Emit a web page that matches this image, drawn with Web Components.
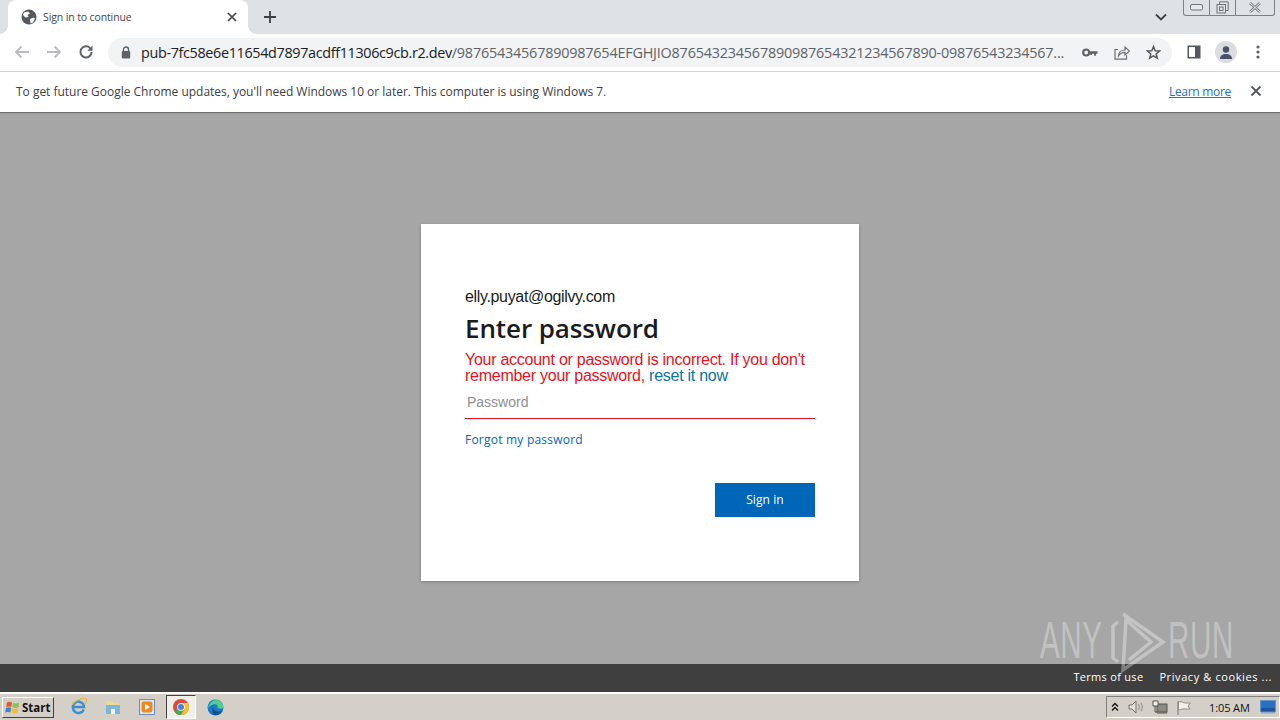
<!DOCTYPE html>
<html>
<head>
<meta charset="utf-8">
<title>Sign in to continue</title>
<style>
  html, body { margin: 0; height: 100%; overflow: hidden; }
  body { width: 1280px; height: 720px; display: flex; flex-direction: column; font-family: "Open Sans", "Liberation Sans", sans-serif; }
</style>
</head>
<body>
<tab-strip>Sign in to continue</tab-strip>
<tool-bar></tool-bar>
<info-bar>To get future Google Chrome updates, you'll need Windows 10 or later. This computer is using Windows 7.</info-bar>
<page-area>
  <login-card email="elly.puyat@ogilvy.com"></login-card>
  <any-run></any-run>
</page-area>
<page-footer></page-footer>
<task-bar></task-bar>

<script>
class TabStrip extends HTMLElement {
  constructor() {
    super()
    this.attachShadow({ mode: 'open' }).innerHTML = `
    <style>
      :host { display: flex; height: 34px; background: #dee1e6; position: relative; flex: none; }
      .tab { width: 240px; margin: 0 0 0 8px; background: #fff; border-radius: 8px 8px 0 0; display: flex; align-items: center; padding: 0 11px 0 13px; box-sizing: border-box; height: 34px; position: relative; }
      .tab::before, .tab::after { content: ""; position: absolute; bottom: 0; width: 8px; height: 8px; }
      .tab::before { left: -8px; background: radial-gradient(circle at 0 0, transparent 7.5px, #fff 8px); }
      .tab::after { right: -8px; background: radial-gradient(circle at 100% 0, transparent 7.5px, #fff 8px); }
      .tab svg { flex: none; }
      .title { flex: 1; margin-left: 6px; font-size: 10.5px; color: #45474a; white-space: nowrap; letter-spacing: -.12px; }
      .plus { margin: 0 0 0 15px; align-self: center; }
      .chev { position: absolute; left: 1155px; top: 13px; }
      .win { position: absolute; left: 1183px; top: 0; width: 92px; height: 16px; border: 1px solid #7d8085; border-top: 0; border-radius: 0 0 3px 3px; display: flex; box-sizing: border-box; }
      .win span { display: flex; align-items: center; justify-content: center; border-left: 1px solid #7d8085; height: 100%; }
      .win span:first-child { border-left: 0; width: 25px; }
      .win span:nth-child(2) { width: 25px; }
      .win span:nth-child(3) { flex: 1; }
    </style>
    <div class="tab">
      <svg width="16" height="16" viewBox="0 0 16 16"><circle cx="8" cy="8" r="7.5" fill="#55585c"/><path d="M3 3.500 7 2.500 9 4.500 6.500 6 7.500 8 4.500 8.500 2 6zM9 10l3.500-1.500 1.500 1-2 4-2.500 1z" fill="#fff"/></svg>
      <span class="title"><slot></slot></span>
      <svg width="10" height="10" viewBox="0 0 10 10"><path d="M1 1 9 9M9 1 1 9" stroke="#45474a" stroke-width="1.700"/></svg>
    </div>
    <svg class="plus" width="14" height="14" viewBox="0 0 14 14"><path d="M7 1v12M1 7h12" stroke="#3c4043" stroke-width="1.800"/></svg>
    <svg class="chev" width="12" height="8" viewBox="0 0 12 8"><path d="M1 1.500 6 6.500 11 1.500" fill="none" stroke="#3c4043" stroke-width="1.800"/></svg>
    <div class="win">
      <span><svg width="13" height="7" viewBox="0 0 13 7"><rect x=".5" y=".5" width="12" height="5.500" rx="1.500" fill="#e8eaee" stroke="#6f7276"/></svg></span>
      <span><svg width="13" height="13" viewBox="0 0 13 13"><path d="M3.500 3V.8h8.700v8.700H10" fill="none" stroke="#6f7276"/><rect x="1" y="3.500" width="8.500" height="8.500" fill="none" stroke="#6f7276"/><rect x="3.500" y="6" width="3.500" height="3.500" fill="none" stroke="#6f7276"/></svg></span>
      <span><svg width="14" height="11" viewBox="0 0 14 11"><path d="M2 1 12 10M12 1 2 10" stroke="#7b7e83" stroke-width="2.600"/><path d="M2 1 12 10M12 1 2 10" stroke="#e8eaee" stroke-width="1"/></svg></span>
    </div>`
  }
}

class ToolBar extends HTMLElement {
  constructor() {
    super()
    this.attachShadow({ mode: 'open' }).innerHTML = `
    <style>
      :host { display: flex; align-items: center; height: 38px; background: #fff; border-bottom: 1px solid #d2d3d5; flex: none; padding-left: 14px; padding-bottom: 1px; box-sizing: border-box; }
      .nav { display: flex; align-items: center; gap: 16px; width: 94px; flex: none; }
      .omni { width: 1064px; height: 29px; flex: none; background: #f1f3f4; border-radius: 15px; display: flex; align-items: center; box-sizing: border-box; padding: 0 11px 0 13px; }
      .url { flex: 1; min-width: 0; margin-left: 10px; font-size: 14.400px; white-space: nowrap; color: #202124; letter-spacing: -.35px; }
      .url i { font-style: normal; color: #5f6368; letter-spacing: -.2px; }
      .actions { display: flex; align-items: center; gap: 16px; flex: none; }
      .right { display: flex; align-items: center; margin-left: 15px; flex: none; }
      .avatar { width: 22px; height: 22px; margin: 0 19px 0 14px; border-radius: 50%; background: #dadce0; display: flex; align-items: center; justify-content: center; }
    </style>
    <div class="nav">
      <svg width="16" height="14" viewBox="0 0 16 14"><path d="M15 7H2M7.500 1.500 2 7l5.500 5.500" fill="none" stroke="#b9bbbe" stroke-width="1.800"/></svg>
      <svg width="16" height="14" viewBox="0 0 16 14"><path d="M1 7h13M8.500 1.500 14 7l-5.500 5.500" fill="none" stroke="#b9bbbe" stroke-width="1.800"/></svg>
      <svg width="16" height="16" viewBox="0 0 16 16"><path d="M13.600 8a5.600 5.600 0 1 1-1.500-3.900" fill="none" stroke="#5f6368" stroke-width="2"/><path d="M14.500 1.500v5.200H9.300z" fill="#5f6368"/></svg>
    </div>
    <div class="omni">
      <svg width="10" height="13" viewBox="0 0 10 13"><path d="M2.500 5V3.500a2.500 2.500 0 0 1 5 0V5" fill="none" stroke="#5f6368" stroke-width="1.400"/><rect x=".8" y="5" width="8.400" height="7.400" rx="1" fill="#5f6368"/></svg>
      <span class="url">pub-7fc58e6e11654d7897acdff11306c9cb.r2.dev<i>/98765434567890987654EFGHJIO876543234567890987654321234567890-09876543234567...</i></span>
      <span class="actions">
        <svg width="16" height="9" viewBox="0 0 16 9"><circle cx="4.200" cy="4.500" r="3" fill="none" stroke="#5f6368" stroke-width="2.200"/><path d="M7 3.300h8.500v2.400h-1.600v2h-1.800v-2H10v1.200H8.300V5.700H7z" fill="#5f6368"/></svg>
        <svg width="16" height="15" viewBox="0 0 16 15"><path d="M4 4.500H1v9.700h11.500v-4" fill="none" stroke="#6b6e72" stroke-width="1.200"/><path d="M4.500 11c0-4 3-6 6.500-6V2l4.500 4-4.500 4V7.400c-2.800 0-5 1-6.500 3.600z" fill="none" stroke="#6b6e72" stroke-width="1.200"/></svg>
        <svg width="15" height="15" viewBox="0 0 15 15"><path d="M7.500 1.600 9.200 5.700l4.400.3-3.400 2.900 1.100 4.300-3.800-2.400-3.800 2.400 1.100-4.300L1.400 6l4.400-.3z" fill="none" stroke="#55585c" stroke-width="1.500"/></svg>
      </span>
    </div>
    <div class="right">
      <svg width="14" height="14" viewBox="0 0 14 14"><rect x=".5" y=".5" width="13" height="13" fill="#55585c"/><rect x="2" y="2" width="6" height="10" fill="#fff"/></svg>
      <span class="avatar"><svg width="14" height="13" viewBox="0 0 14 13"><circle cx="7" cy="3.500" r="3.200" fill="#4a5068"/><path d="M1 13c0-3.500 2.500-5 6-5s6 1.500 6 5z" fill="#4a5068"/></svg></span>
      <svg width="4" height="14" viewBox="0 0 4 14"><circle cx="2" cy="2" r="1.600" fill="#5f6368"/><circle cx="2" cy="7" r="1.600" fill="#5f6368"/><circle cx="2" cy="12" r="1.600" fill="#5f6368"/></svg>
    </div>`
  }
}

class InfoBar extends HTMLElement {
  constructor() {
    super()
    this.attachShadow({ mode: 'open' }).innerHTML = `
    <style>
      :host { display: flex; align-items: center; height: 40px; background: #fff; flex: none; padding: 0 18px 2px 16px; box-sizing: border-box; box-shadow: 0 1px 1px #6f6f6f; position: relative; z-index: 1; font-size: 12px; color: #3c4043; }
      .msg { flex: 1; white-space: nowrap; letter-spacing: -.02px; }
      a { color: #2a6fc4; text-decoration: underline; margin-right: 19px; letter-spacing: -.3px; }
    </style>
    <span class="msg"><slot></slot></span>
    <a href="#">Learn more</a>
    <svg width="12" height="12" viewBox="0 0 12 12"><path d="M1.500 1.500l9 9M10.500 1.500l-9 9" stroke="#55585c" stroke-width="1.800"/></svg>`
  }
}

class PageArea extends HTMLElement {
  constructor() {
    super()
    this.attachShadow({ mode: 'open' }).innerHTML = `
    <style>
      :host { display: flex; justify-content: center; align-items: flex-start; flex: 1; background: #a6a6a6; padding-top: 112px; box-sizing: border-box; position: relative; }
    </style>
    <slot></slot>`
  }
}

class LoginCard extends HTMLElement {
  constructor() {
    super()
    this.attachShadow({ mode: 'open' }).innerHTML = `
    <style>
      :host { display: block; width: 438px; height: 357px; background: #fff; box-sizing: border-box; padding: 63px 44px 0; box-shadow: 0 1px 3px rgba(0,0,0,.25); font-family: "Liberation Sans", Arial, sans-serif; }
      .email { font-size: 16px; line-height: 19px; color: #1b1b1b; letter-spacing: -.34px; }
      h1 { margin: 5px 0 0; font: 600 26px/35px "Open Sans", sans-serif; color: #1b1b1b; letter-spacing: -.1px; }
      .err { margin-top: 6px; font-size: 16px; line-height: 16px; color: #e81123; letter-spacing: -.26px; }
      .err a { color: #0b74a0; text-decoration: none; }
      .field { margin-top: 2px; height: 32px; border-bottom: 1px solid #e81123; font-size: 14px; line-height: 32px; color: #8f8f8f; padding-left: 2px; }
      .forgot { display: block; margin-top: 13px; font: 12px/16px "Open Sans", sans-serif; color: #0067b8; text-decoration: none; letter-spacing: .22px; }
      .row { display: flex; justify-content: flex-end; margin-top: 35px; }
      button { width: 100px; height: 34px; border: 0; background: #0067b8; color: #fff; font: 12px "Open Sans", sans-serif; padding: 0 0 2px; letter-spacing: .1px; }
    </style>
    <div class="email"></div>
    <h1>Enter password</h1>
    <div class="err">Your account or password is incorrect. If you don't remember your password, <a href="#">reset it now</a></div>
    <div class="field">Password</div>
    <a class="forgot" href="#">Forgot my password</a>
    <div class="row"><button>Sign in</button></div>`
    this.shadowRoot.querySelector('.email').textContent = this.getAttribute('email')
  }
}

class AnyRun extends HTMLElement {
  constructor() {
    super()
    this.attachShadow({ mode: 'open' }).innerHTML = `
    <style>
      :host { position: absolute; left: 1038px; top: 497px; width: 196px; height: 64px; color: rgba(255,255,255,.33); font: 400 51px/44px "Liberation Sans", sans-serif; z-index: 2; pointer-events: none; }
      span { position: absolute; top: 10px; transform: scaleX(.58); transform-origin: left center; white-space: nowrap; letter-spacing: 1px; }
      .a { left: 2px; }
      .r { left: 130px; }
      svg { position: absolute; left: 71px; top: 1px; }
    </style>
    <span class="a">ANY</span>
    <svg width="58" height="64" viewBox="0 0 58 64" fill="none" stroke="rgba(255,255,255,.34)" stroke-width="3.500"><path d="M9 12 4 16V48l5 4"/><path d="M14 4 54 32 14 60 17 10 42 32 20 50"/></svg>
    <span class="r">RUN</span>`
  }
}

class PageFooter extends HTMLElement {
  constructor() {
    super()
    this.attachShadow({ mode: 'open' }).innerHTML = `
    <style>
      :host { display: flex; justify-content: flex-end; align-items: flex-end; gap: 16px; height: 28px; background: #3f3f3f; color: #fff; font-size: 11px; padding: 0 8px 8px 0; box-sizing: border-box; flex: none; letter-spacing: .3px; white-space: nowrap; position: relative; z-index: 1; }
      span + span { letter-spacing: .6px; }
    </style>
    <span>Terms of use</span><span>Privacy &amp; cookies ...</span>`
  }
}

class TaskBar extends HTMLElement {
  constructor() {
    super()
    this.attachShadow({ mode: 'open' }).innerHTML = `
    <style>
      :host { display: flex; align-items: center; height: 28px; background: #d4d0c8; border-top: 2px solid #fff; box-sizing: border-box; flex: none; position: relative; }
      .start { margin-left: 2px; width: 52px; height: 21px; box-sizing: border-box; display: flex; align-items: center; gap: 2px; padding-left: 2px; border: 1px solid; border-color: #fff #404040 #404040 #fff; font: 700 11.500px "Open Sans", sans-serif; color: #111; background: #d4d0c8; }
      .apps { display: flex; align-items: center; margin-left: 8px; height: 100%; }
      .apps > * { flex: none; }
      .slot { width: 34px; display: flex; justify-content: center; align-items: center; height: 24px; }
      .active { width: 30px; height: 24px; margin: 0 2px; box-sizing: border-box; background: #f1efea; border: 1px solid; border-color: #404040 #fff #fff #404040; display: flex; align-items: center; justify-content: center; }
      .tray { margin-left: auto; margin-right: 0; width: 174px; height: 22px; display: flex; align-items: center; box-sizing: border-box; border: 1px solid; border-color: #808080 #fff #fff #808080; padding-left: 4px; font: 11px "Open Sans", sans-serif; color: #111; white-space: nowrap; }
      .tray svg { flex: none; }
      .clock { margin-left: 17px; width: 48px; letter-spacing: -.1px; }
    </style>
    <div class="start">
      <svg width="15" height="15" viewBox="0 0 15 15"><path d="M2 2.500c1.500-1 3-.8 5 0L6.300 7C4.500 6.300 3 6.200 1.200 7z" fill="#e2572c"/><path d="M8 2.800c2 .8 3.500.8 6 0l-.6 4.400c-2.300.9-3.800.6-5.800 0z" fill="#8cc04a"/><path d="M1 8c2-1 3.500-.8 5.200 0l-.7 4.600c-1.800-.8-3.300-1-5.300 0z" fill="#3f83d6"/><path d="M7.400 8.200c2 .6 3.600.9 5.900 0l-.7 4.400c-2.400 1-4 .6-5.900-.1z" fill="#f3bb2f"/></svg>
      Start
    </div>
    <div class="apps">
      <span class="slot"><svg width="18" height="18" viewBox="0 0 18 18"><path d="M13.800 11.500A5.700 5.700 0 1 1 13.500 6.500L14 9H3.500" fill="none" stroke="#3a8ed6" stroke-width="2.500"/><path d="M2 7C5 2 12 0 16 1c1.500 1 .3 3.500-1.500 5.500" fill="none" stroke="#e5b53a" stroke-width="1.200"/></svg></span>
      <span class="slot"><svg width="16" height="16" viewBox="0 0 16 16"><path d="M1 6h14v9H1z" fill="#7db6d8"/><path d="M2 2h5l1.500 2H14v2H2z" fill="#f2d98a"/><rect x="6" y="10" width="4" height="5" fill="#f4f7f8"/></svg></span>
      <span class="slot"><svg width="16" height="16" viewBox="0 0 16 16"><rect x=".5" y=".5" width="15" height="15" fill="#dbe7f5" stroke="#6a8fc0"/><rect x="2.500" y="2.500" width="11" height="11" rx="2" fill="#f08a1d"/><path d="M6 5v6l5-3z" fill="#fff"/></svg></span>
      <span class="active"><svg width="16" height="16" viewBox="0 0 16 16"><circle cx="8" cy="8" r="8" fill="#dd4b3e"/><path d="M8 8 1.070 12A8 8 0 0 0 8 16a8 8 0 0 0 6.930-12H8z" fill="#4ca553"/><path d="M8 4h6.930A8 8 0 0 1 8 16l3.460-6z" fill="#fbc02d"/><circle cx="8" cy="8" r="3.800" fill="#fff"/><circle cx="8" cy="8" r="3" fill="#3f80e8"/></svg></span>
      <span class="slot"><svg width="17" height="17" viewBox="0 0 17 17"><circle cx="8.500" cy="8.500" r="8" fill="#1b79c7"/><path d="M1 9C2 4 6 1 9 1c4 0 7 3 7.500 7.500-1 1.500-5 1.500-6 0C11.500 6 9 4.500 6 5.500 3.500 6.200 2 7.500 1 9z" fill="#4fd18c"/><path d="M6 8c0 3 3 5 6 4.500 1 0 2-.5 3-1-1 3-4 5-7 4.500-3-.5-3.500-5-2-8z" fill="#0d4f97"/></svg></span>
    </div>
    <div class="tray">
      <svg width="8" height="10" viewBox="0 0 8 10"><path d="M1 4.500l3-3 3 3M1 8.500l3-3 3 3" fill="none" stroke="#111" stroke-width="1.300"/></svg>
      <svg style="margin-left:9px" width="16" height="14" viewBox="0 0 16 14"><path d="M1 5h3l4-4v12L4 9H1z" fill="#e4e1da" stroke="#77746c"/><path d="M10.500 4q2 3 0 6M13 2.500q3 4.500 0 9" fill="none" stroke="#8f8c84"/></svg>
      <svg style="margin-left:8px" width="16" height="15" viewBox="0 0 16 15"><rect x="5" y="4" width="10" height="8" fill="#8c8a84" stroke="#55534e"/><path d="M1 1h5v5H1z" fill="#f2f0ea" stroke="#55534e"/><path d="M3 6v6h2M5 13h10" stroke="#55534e" fill="none"/></svg>
      <svg style="margin-left:8px" width="16" height="15" viewBox="0 0 16 15"><path d="M2 1v14" stroke="#77746c"/><path d="M2.500 2c4-1 4 1 7 1l5 0-2.500 3 2 3c-4 .5-5-.5-7 0-2 .3-3 .5-4.500 1z" fill="#f2f0ea" stroke="#8f8c84"/></svg>
      <span class="clock">1:05 AM</span>
      <svg width="16" height="14" viewBox="0 0 16 14" style="margin-left:3px"><rect x=".5" y=".5" width="15" height="11" fill="#2b6fc4" stroke="#6d92c2"/><path d="M1 8h14v3.500H1z" fill="#1f55a0"/><rect x="1" y="12" width="14" height="1.500" fill="#8ea7c9"/></svg>
    </div>`
  }
}

customElements.define('tab-strip', TabStrip)
customElements.define('tool-bar', ToolBar)
customElements.define('info-bar', InfoBar)
customElements.define('page-area', PageArea)
customElements.define('login-card', LoginCard)
customElements.define('any-run', AnyRun)
customElements.define('page-footer', PageFooter)
customElements.define('task-bar', TaskBar)
</script>
</body>
</html>
